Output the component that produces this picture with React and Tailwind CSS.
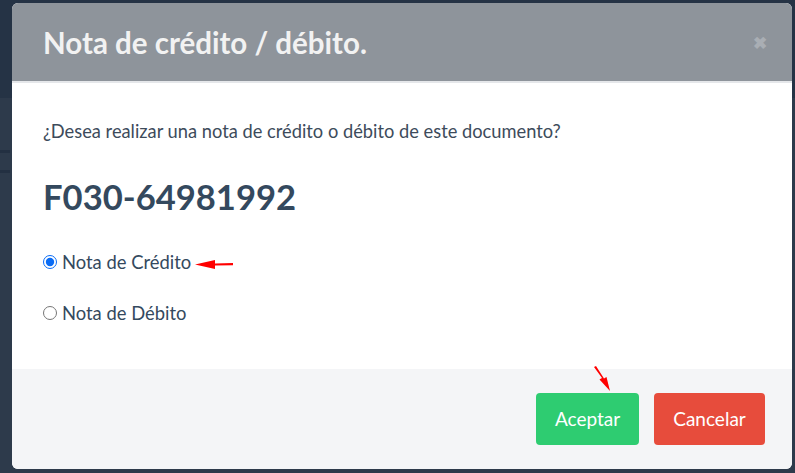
export default function App() {
  return (
    <div className="relative w-[795px] h-[473px] overflow-hidden bg-[#2d3a4b]" style={{ fontFamily: 'Lato, "Noto Sans", sans-serif' }}>
      <div className="absolute left-0 top-0 w-full h-[98px] bg-[#253345]" />
      <div className="absolute left-0 top-[150px] w-[10px] h-[3px] bg-[#233042]" />
      <div className="absolute left-0 top-[170px] w-[10px] h-[3px] bg-[#233042]" />
      <div className="relative ml-[12px] mt-[3px] w-[780px] h-[466px] rounded-[6px] overflow-hidden bg-white flex flex-col">
        <div className="h-[80px] shrink-0 bg-[#8e949b] flex items-center justify-between pl-[31px] pr-[25px] border-b-2 border-[#e5e7ea]">
          <h1 className="text-[29.5px] font-bold text-[#f2f2f2] leading-none mt-[2px]">Nota de crédito / débito.</h1>
          <span className="text-[#a9aeb4] text-[17px] font-bold leading-none">✖</span>
        </div>
        <div className="h-[286px] shrink-0 pl-[31px] pt-[38px]">
          <p className="text-[18.3px] text-[#3d4b5b] leading-[20px]">¿Desea realizar una nota de crédito o débito de este documento?</p>
          <div className="mt-[38px] text-[34.6px] font-bold text-[#34495e] leading-[36px]">F030-64981992</div>
          <div className="mt-[37px] flex flex-col gap-[31px]">
            <label className="flex items-center gap-[5px] text-[18.4px] text-[#34495e] leading-[20px] h-[20px]">
              <input type="radio" name="n" defaultChecked className="w-[14px] h-[14px] m-0 accent-[#0a6cf5]" />
              <span>Nota de Crédito</span>
              <svg width="38" height="11" viewBox="0 0 38 11" className="ml-[-1px] mt-[4px]">
                <path d="M20 1 L0 5.5 L20 10 L20 6.6 L38 6.2 L38 4 L20 4.4 Z" fill="#f00" />
              </svg>
            </label>
            <label className="flex items-center gap-[5px] text-[18.4px] text-[#34495e] leading-[20px] h-[20px]">
              <input type="radio" name="n" className="w-[14px] h-[14px] m-0" />
              <span>Nota de Débito</span>
            </label>
          </div>
        </div>
        <div className="relative flex-1 bg-[#f4f5f7] flex items-center justify-end gap-[15px] pr-[27px]">
          <svg width="22" height="30" viewBox="0 0 22 30" className="absolute left-[580px] top-[-3px]">
            <path d="M2 1 L10 12 L7.5 13.5 L18 25 L14.5 11 L12 12.5 L4 0 Z" fill="#f00" />
          </svg>
          <button className="w-[103px] h-[52px] rounded-[4px] bg-[#2ecc71] text-white text-[19px]">Aceptar</button>
          <button className="w-[111px] h-[52px] rounded-[4px] bg-[#e74c3c] text-white text-[19px]">Cancelar</button>
        </div>
      </div>
    </div>
  );
}
